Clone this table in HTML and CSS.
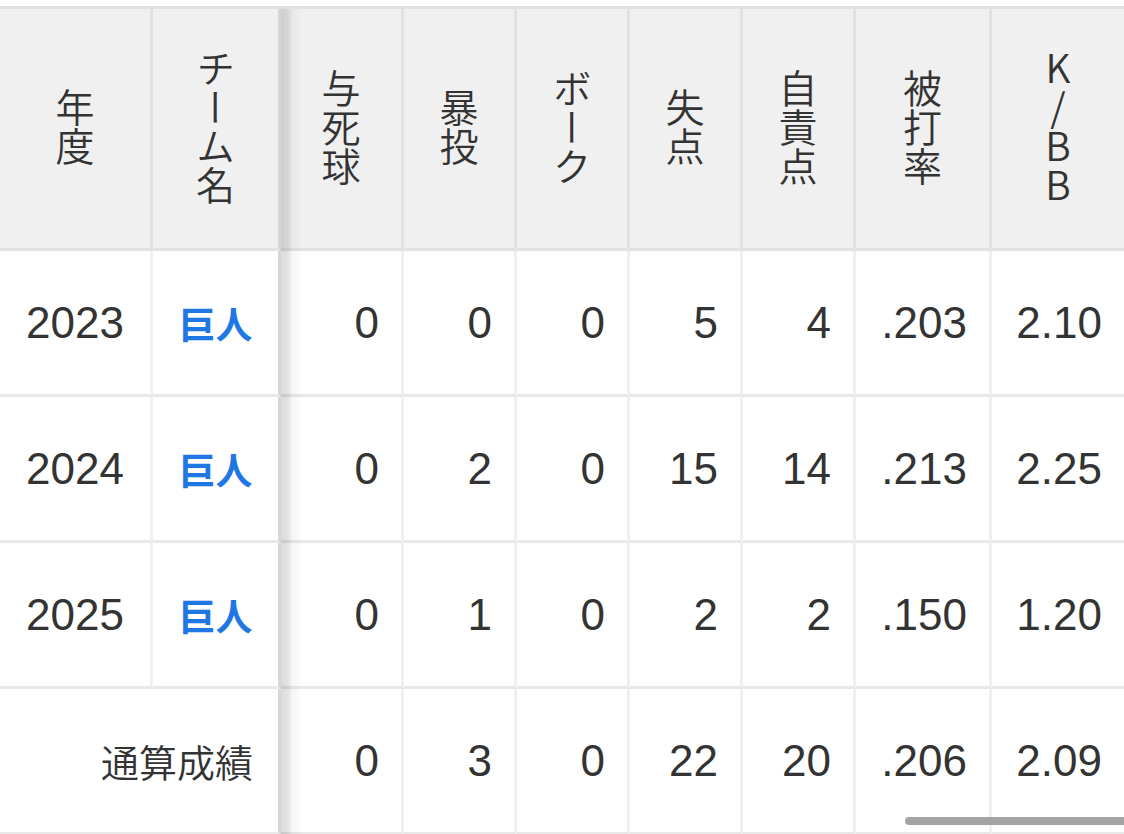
FILE: index.html
```html
<!DOCTYPE html>
<html lang="ja">
<head>
<meta charset="utf-8">
<title>成績</title>
<link rel="stylesheet" href="styles.css">
</head>
<body>
<div class="wrap">
  <table class="stats">
    <thead>
      <tr>
        <th class="w-year"><span class="vt">年度</span></th>
        <th class="w-team sticky"><span class="vt">チーム名</span></th>
        <th class="w-3"><span class="vt">与死球</span></th>
        <th class="w-4"><span class="vt">暴投</span></th>
        <th class="w-4"><span class="vt">ボーク</span></th>
        <th class="w-4"><span class="vt">失点</span></th>
        <th class="w-4"><span class="vt">自責点</span></th>
        <th class="w-8"><span class="vt">被打率</span></th>
        <th class="w-9 last"><span class="vt">K/BB</span></th>
      </tr>
    </thead>
    <tbody>
      <tr>
        <td class="year">2023</td>
        <td class="team sticky"><a href="#">巨人</a></td>
        <td class="num">0</td>
        <td class="num">0</td>
        <td class="num">0</td>
        <td class="num">5</td>
        <td class="num">4</td>
        <td class="num">.203</td>
        <td class="num last">2.10</td>
      </tr>
      <tr>
        <td class="year">2024</td>
        <td class="team sticky"><a href="#">巨人</a></td>
        <td class="num">0</td>
        <td class="num">2</td>
        <td class="num">0</td>
        <td class="num">15</td>
        <td class="num">14</td>
        <td class="num">.213</td>
        <td class="num last">2.25</td>
      </tr>
      <tr>
        <td class="year">2025</td>
        <td class="team sticky"><a href="#">巨人</a></td>
        <td class="num">0</td>
        <td class="num">1</td>
        <td class="num">0</td>
        <td class="num">2</td>
        <td class="num">2</td>
        <td class="num">.150</td>
        <td class="num last">1.20</td>
      </tr>
      <tr>
        <td class="total sticky" colspan="2">通算成績</td>
        <td class="num">0</td>
        <td class="num">3</td>
        <td class="num">0</td>
        <td class="num">22</td>
        <td class="num">20</td>
        <td class="num">.206</td>
        <td class="num last">2.09</td>
      </tr>
    </tbody>
  </table>
  <div class="scrollbar"></div>
</div>
</body>
</html>
```
FILE: styles.css
```css
html, body {
  margin: 0;
  padding: 0;
  background: #ffffff;
}

body {
  font-family: "Liberation Sans", "Noto Sans CJK JP", sans-serif;
  color: #333333;
}

.wrap {
  position: relative;
  width: 1124px;
  height: 834px;
  padding-top: 6px;
  box-sizing: border-box;
  overflow: hidden;
}

.stats {
  table-layout: fixed;
  border-collapse: separate;
  border-spacing: 0;
  width: 1124px;
  border-top: 3px solid #e0e0e0;
}

.stats th,
.stats td {
  box-sizing: border-box;
  padding: 0;
  position: relative;
}

.stats th {
  height: 242px;
  padding-top: 8px;
  background: #f0f0f0;
  border-right: 3px solid #e2e2e2;
  border-bottom: 3px solid #e2e2e2;
  text-align: center;
  vertical-align: middle;
  font-family: "Noto Sans CJK JP", sans-serif;
  font-weight: 350;
  font-size: 39px;
  color: #333333;
}

.w-year { width: 153px; }
.w-team { width: 128px; }
.w-3 { width: 123px; }
.w-4 { width: 113px; }
.w-8 { width: 136px; }
.w-9 { width: 132px; }

.vt {
  display: inline-block;
  writing-mode: vertical-rl;
  text-orientation: upright;
  line-height: 40px;
}

.stats td {
  height: 146px;
  border-right: 3px solid #f0f0f0;
  border-bottom: 3px solid #e8e8e8;
  vertical-align: middle;
  font-size: 44px;
  color: #333333;
}

.stats .last {
  border-right: none;
}

.stats .sticky {
  border-right: 3px solid #d6d6d6;
}

.stats .sticky::after {
  content: "";
  position: absolute;
  top: 0;
  bottom: -3px;
  left: 100%;
  margin-left: 3px;
  width: 22px;
  background: linear-gradient(to right, rgba(0, 0, 0, 0.14) 0, rgba(0, 0, 0, 0.11) 7px, rgba(0, 0, 0, 0.04) 11px, rgba(0, 0, 0, 0) 22px);
  pointer-events: none;
  z-index: 1;
}

.stats .year {
  text-align: center;
}

.stats .team {
  text-align: center;
  font-family: "Noto Sans CJK JP", sans-serif;
  font-size: 37px;
  font-weight: 700;
}

.team a {
  color: #1f77e4;
  text-decoration: none;
}

.stats .total {
  text-align: right;
  padding-right: 25px;
  font-family: "Noto Sans CJK JP", sans-serif;
  font-size: 38px;
  font-weight: 350;
}

.stats .num {
  text-align: right;
  padding-right: 22px;
}

.scrollbar {
  position: absolute;
  left: 905px;
  right: -12px;
  top: 817px;
  height: 8px;
  border-radius: 4px;
  background: #a3a3a3;
  z-index: 2;
}
```
